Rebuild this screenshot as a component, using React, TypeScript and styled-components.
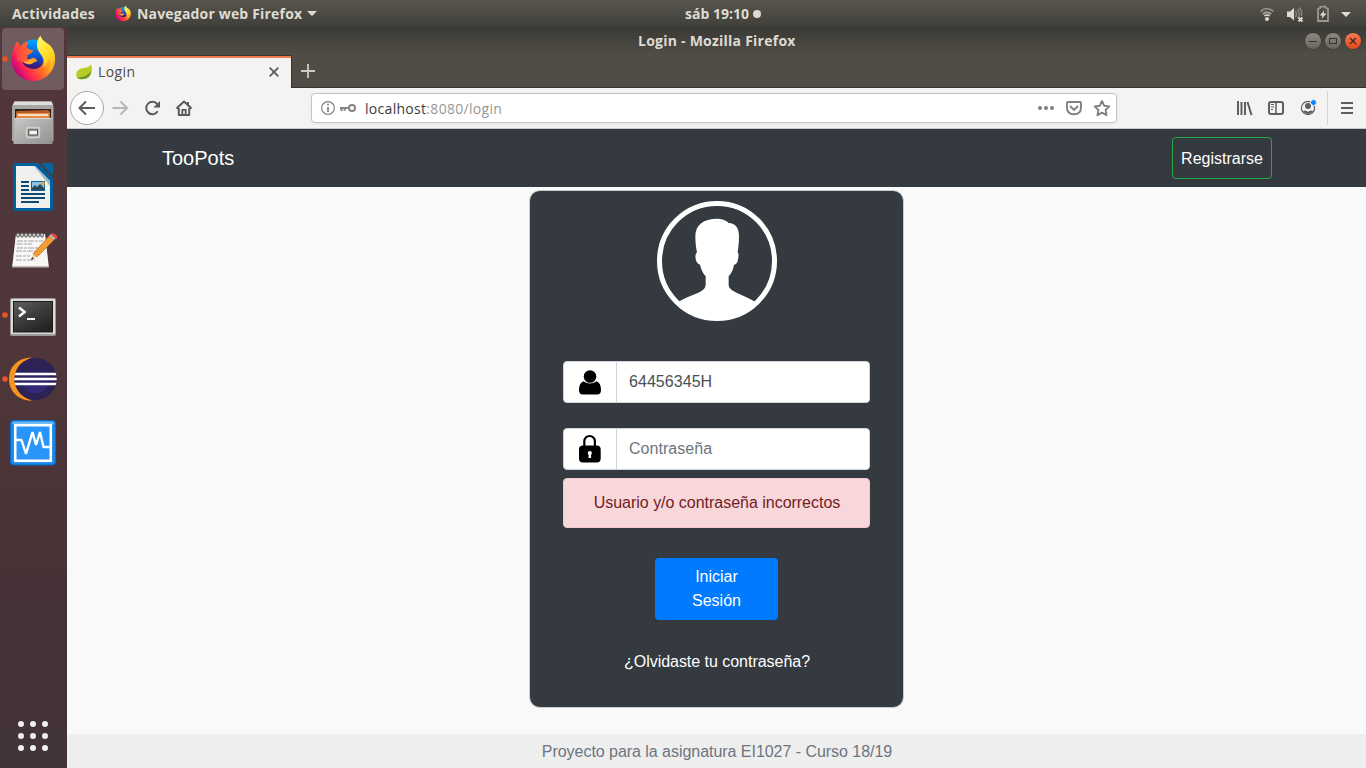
import React from "react";
import styled, { createGlobalStyle } from "styled-components";

const GlobalStyle = createGlobalStyle`
  * { box-sizing: border-box; }
  body { margin: 0; overflow: hidden; }
  svg { display: block; flex: none; }
`;

const Desktop = styled.div`
  width: 1366px;
  height: 768px;
  display: flex;
  flex-direction: column;
  overflow: hidden;
  font-family: "Open Sans", "Noto Sans", sans-serif;
`;

const TopBar = styled.header`
  height: 27px;
  flex: none;
  display: grid;
  grid-template-columns: 673px auto 1fr;
  align-items: center;
  padding: 0 14px 0 12px;
  background: linear-gradient(#58554d, #403f3a);
  color: #dfdbd2;
`;

const BarGroup = styled.div<{ $end?: boolean }>`
  display: flex;
  align-items: center;
  justify-content: ${(p) => (p.$end ? "flex-end" : "flex-start")};
`;

const Label = styled.span<{ $size?: number; $track?: number; $bold?: boolean; $color?: string }>`
  display: inline-block;
  padding-bottom: 2px;
  vertical-align: middle;
  font-size: ${(p) => p.$size ?? 14}px;
  line-height: 18px;
  letter-spacing: ${(p) => p.$track ?? 0}px;
  font-weight: ${(p) => (p.$bold ? 700 : 400)};
  color: ${(p) => p.$color ?? "inherit"};
  white-space: nowrap;
`;

const AppMenu = styled.div`
  display: flex;
  align-items: center;
  margin-left: 20px;
`;

const MenuName = styled.div`
  margin-left: 6px;
  width: 165px;
  padding-top: 2px;
  line-height: 20px;
  font-size: 14px;
`;

const ActivitiesBox = styled.div`
  width: 83px;
  padding-top: 2px;
  line-height: 20px;
  font-size: 14px;
`;

const Clock = styled.div`
  display: flex;
  align-items: center;
  gap: 4px;
  width: 76px;
`;

const ClockText = styled.div`
  width: 64px;
  padding-top: 2px;
  line-height: 20px;
  font-size: 14px;
`;

const Arrow = styled.i`
  width: 0;
  height: 0;
  margin-left: 5px;
  border: 5px solid transparent;
  border-top-color: #dfdbd2;
  border-bottom: 0;
`;

const Main = styled.div`
  flex: 1;
  min-height: 0;
  display: flex;
`;

const Dock = styled.nav`
  width: 67px;
  flex: none;
  display: flex;
  flex-direction: column;
  gap: 2px;
  padding: 1px 3px 0 2px;
  background: linear-gradient(180deg, #51373b 0%, #4f363a 45%, #453236 80%, #423438 100%);
`;

const DockItem = styled.div<{ $active?: boolean }>`
  width: 62px;
  height: 62px;
  border-radius: 4px;
  background: ${(p) => (p.$active ? "rgba(255,255,255,.18)" : "none")};
`;

const AppsButton = styled.div`
  margin: auto auto 17px 16px;
  display: grid;
  grid-template-columns: repeat(3, 6px);
  gap: 6px;
`;

const AppDot = styled.i`
  width: 6px;
  height: 6px;
  border-radius: 50%;
  background: #f1efee;
`;

const Window = styled.section`
  flex: 1;
  min-width: 0;
  display: flex;
  flex-direction: column;
`;

const TitleBar = styled.div`
  height: 28px;
  flex: none;
  display: grid;
  grid-template-columns: 1fr auto 1fr;
  align-items: center;
  padding: 0 5px 0 0;
  background: linear-gradient(#3a3935, #504d46);
  color: #dfdbd2;
`;

const TitleText = styled.div`
  width: 158px;
  grid-column: 2;
  margin-left: 6px;
  line-height: 20px;
  font-size: 14px;
`;

const WindowButtons = styled.div`
  display: flex;
  justify-content: flex-end;
  gap: 4px;
`;

const WindowButton = styled.span<{ $close?: boolean }>`
  width: 16px;
  height: 16px;
  border-radius: 50%;
  background: ${(p) => (p.$close ? "linear-gradient(#f47a55, #e0491b)" : "linear-gradient(#8b8981, #66645d)")};
  box-shadow: 0 0 0 0.5px #34322d;
`;

const TabStrip = styled.div`
  height: 33px;
  flex: none;
  display: flex;
  background: #504d46;
  border-bottom: 1px solid #34332f;
`;

const Tab = styled.div`
  width: 225px;
  height: 33px;
  display: flex;
  align-items: center;
  padding: 0 12px 0 9px;
  border-top: 1px solid #38352f;
  border-right: 1px solid #34332f;
  background: linear-gradient(#f27b50 2px, #f4f3f2 2px);
  color: #4a4a4a;
`;

const TabTitle = styled.div`
  margin-left: 6px;
  flex: 1;
  line-height: 20px;
  font-size: 14px;
`;

const NewTab = styled.div`
  padding: 9px;
`;

const Toolbar = styled.div`
  height: 41px;
  flex: none;
  display: flex;
  align-items: center;
  background: #f4f3f2;
  border-bottom: 1px solid #c9c8c6;
`;

const NavIcons = styled.div`
  width: 244px;
`;

const UrlBar = styled.div`
  width: 806px;
  height: 30px;
  display: flex;
  align-items: center;
  padding: 0 5px 0 8px;
  border: 1px solid #c7c4c0;
  border-radius: 4px;
  background: #fff;
  box-shadow: 0 1px 3px rgba(0, 0, 0, 0.06);
`;

const UrlText = styled.div`
  flex: 1;
  margin-left: 8px;
  padding-top: 3px;
  line-height: 20px;
  font-size: 14px;
`;

const ToolIcons = styled.div`
  margin-left: auto;
`;

const Page = styled.main`
  flex: 1;
  min-height: 0;
  display: flex;
  flex-direction: column;
  background: #f9f9f9;
  font-family: "Liberation Sans", Arial, sans-serif;
  font-size: 16px;
  line-height: 24px;
`;

const SiteNav = styled.nav`
  height: 58px;
  flex: none;
  display: flex;
  align-items: center;
  justify-content: space-between;
  padding: 0 94px 0 95px;
  background: #343a40;
  color: #fff;
`;

const Brand = styled.span`
  font-size: 20px;
`;

const RegisterButton = styled.button`
  width: 100px;
  height: 42px;
  padding: 2px 0 0;
  border: 1px solid #28a745;
  border-radius: 4px;
  background: transparent;
  color: #fff;
  font: inherit;
`;

const Content = styled.div`
  flex: 1;
  display: flex;
  justify-content: center;
  align-items: flex-start;
  padding-top: 3px;
`;

const Card = styled.form`
  width: 375px;
  height: 518px;
  display: flex;
  flex-direction: column;
  align-items: center;
  padding: 10px 33px 0;
  border: 1px solid #c9cbcc;
  border-radius: 11px;
  background: #343a40;
`;

const Field = styled.label`
  width: 307px;
  height: 42px;
  display: flex;
  margin-bottom: 25px;
  border: 1px solid #ced4da;
  border-radius: 4px;
  background: #fff;
  overflow: hidden;
`;

const FieldIcon = styled.span`
  width: 53px;
  border-right: 1px solid #ced4da;
`;

const FieldInput = styled.input`
  flex: 1;
  min-width: 0;
  padding: 0 12px;
  border: 0;
  outline: 0;
  background: #fff;
  color: #495057;
  font: inherit;
  letter-spacing: 0.05px;
  &::placeholder { color: #6c757d; opacity: 1; }
`;

const Alert = styled.div`
  width: 307px;
  height: 50px;
  margin: -17px 0 30px;
  padding: 12px 0 12px 1px;
  border: 1px solid #f5c6cb;
  border-radius: 4px;
  background: #f8d7da;
  color: #721c24;
  text-align: center;
  letter-spacing: -0.02px;
`;

const Submit = styled.button`
  width: 123px;
  height: 62px;
  margin: 0 0 30px;
  padding: 0 30px 1px;
  border: 0;
  border-radius: 4px;
  background: #007bff;
  color: #fff;
  font: inherit;
`;

const Forgot = styled.a`
  color: #fff;
  letter-spacing: -0.03px;
  padding-left: 1px;
`;

const AvatarWrap = styled.div`
  height: 120px;
  margin-bottom: 40px;
`;

const Footer = styled.footer`
  height: 34px;
  flex: none;
  padding: 6px 0 0 1px;
  background: #eeeeee;
  color: #6c757d;
  text-align: center;
  letter-spacing: -0.04px;
`;

const Running = ({ y }: { y: number }) => <circle cx="5" cy={y} r="2.8" fill="#e95420" />;

const FirefoxArt = ({ id }: { id: string }) => (
  <>
    <defs>
      <linearGradient id={id + "a"} x1="1" y1="0.1" x2="0.05" y2="0.7">
        <stop offset="0" stopColor="#ffe226" />
        <stop offset=".3" stopColor="#ffae1a" />
        <stop offset=".55" stopColor="#ff6a2b" />
        <stop offset=".78" stopColor="#ff2a4d" />
        <stop offset="1" stopColor="#c60084" />
      </linearGradient>
      <linearGradient id={id + "b"} x1=".6" y1="0" x2=".5" y2="1">
        <stop offset="0" stopColor="#00a8ff" />
        <stop offset=".5" stopColor="#0a55d8" />
        <stop offset=".8" stopColor="#3a1a78" />
      </linearGradient>
      <linearGradient id={id + "c"} x1=".3" y1="0" x2=".7" y2="1">
        <stop offset="0" stopColor="#fff85a" />
        <stop offset=".6" stopColor="#ffd426" />
        <stop offset="1" stopColor="#ffa414" />
      </linearGradient>
      <linearGradient id={id + "d"} x1="0" y1="0" x2="1" y2="0">
        <stop offset="0" stopColor="#ff3c45" />
        <stop offset="1" stopColor="#ff8a1f" />
      </linearGradient>
    </defs>
    <circle cx="34" cy="56.500" r="17" fill={`url(#${id}b)`} />
    <path d="M17 41C14.500 44 13.800 48 13.500 51C11 54 11 58 11.500 62C13 73 22 81 33 81C45 81 54.500 72 55 60C55.300 54 53 48 49 45L43 56C45 63 41 69 34 69C27 69 21 64 21.500 57L22 52L25 46L20 46Z" fill={`url(#${id}a)`} />
    <path d="M16 47L20.500 46Q24 41.500 28.500 42L26.500 47Q28 49.500 33 50Q33 53 27.500 55L27 58.500Q29 60 33 57.500Q37 58.500 37 61Q34 61.500 32 63.500Q28 66 23 62L17 60Z" fill={`url(#${id}d)`} />
    <path d="M22.500 61Q27 62.500 30 60Q34 57.500 37 61Q34 61.500 32 63.500Q27 65.500 22.500 61Z" fill="#ffb12a" />
    <path d="M40.500 35.500C36 41 36.500 47 38.500 51C42 56 46 61 43.500 67C48 64 49 60 49 58C52 64 50 71 44 75C57 68 58 52 49 44.500C45 42 41 39 40.500 35.500Z" fill={`url(#${id}c)`} />
  </>
);

const FirefoxIcon = () => (
  <svg width="62" height="62" viewBox="2 28 62 62">
    <FirefoxArt id="fxl" />
    <Running y={59} />
  </svg>
);

const FilesIcon = () => (
  <svg width="62" height="62" viewBox="2 92 62 62">
    <defs>
      <linearGradient id="fg" x2="1" y2="1">
        <stop stopColor="#c8c8c6" />
        <stop offset="1" stopColor="#92918f" />
      </linearGradient>
    </defs>
    <path d="M14.500 101.500H51.500L53.500 106V141H12V106Z" fill="#a7a6a4" />
    <path d="M14.500 101.500H51.500L53 105H13Z" fill="#dededc" />
    <path d="M15 109H51V118H15Z" fill="#2e211a" />
    <path d="M17 111L48 110L50 112V119H16V112Z" fill="#b55a26" />
    <path d="M16.500 113H49.500V118H16.500Z" fill="#e58a48" />
    <path d="M18 114.200H48V115.800H18Z" fill="#fff0df" />
    <path d="M14.500 118H51.500L52.500 144H13.500Z" fill="url(#fg)" />
    <path d="M14.500 118.500H51.500" stroke="#d7d6d4" />
    <rect x="26.700" y="127.700" width="12.600" height="9.600" rx="1" fill="#9d9c9a" stroke="#d3d2d0" strokeWidth="1.700" />
    <rect x="28.800" y="130" width="8.700" height="5" fill="#f2f2f0" stroke="#4c4b49" />
  </svg>
);

const WriterIcon = () => (
  <svg width="62" height="62" viewBox="2 156 62 62">
    <path d="M15 163H38L53 178.500V209Q53 211 51 211H15Q13 211 13 209V165Q13 163 15 163Z" fill="#00609c" />
    <path d="M16 166H35L50 181V208H16Z" fill="#f1f0ef" />
    <path d="M35 166L50 181V186L34 166Z" fill="#9fb8c8" />
    <path d="M41 163H51Q53 163 53 165V175Q49 173 46 169Z" fill="#05669f" />
    <path d="M21 182H29M21 186H29M21 190H29M21 194H45M21 198H45M21 202H39" stroke="#0d4973" strokeWidth="1.800" />
    <rect x="31" y="181" width="14" height="10" fill="#0c659a" />
    <rect x="32" y="182" width="12" height="8" fill="#8ec2df" />
    <path d="M32 190V188L35 185L37 187L40 184L44 188V190Z" fill="#294956" />
    <circle cx="43" cy="183.500" r="2" fill="#dba936" />
  </svg>
);

const EditorIcon = () => (
  <svg width="62" height="62" viewBox="2 220 62 62">
    <path d="M16 235H45L49 267.500H12Z" fill="#bbb9b5" />
    <path d="M16 234H45L48.500 266H12.500Z" fill="#f8f7f5" />
    {[18, 22, 26, 30, 34, 38, 42].map((x) => (
      <ellipse key={x} cx={x} cy="235" rx="1.400" ry="2.200" fill="#ddd" stroke="#454442" strokeWidth=".9" />
    ))}
    <path d="M17 241H43M16.500 244H32M17 248H39M16 251H36M16 256H30M16 260H35" stroke="#a5a4a2" strokeDasharray="6 1 3 1" />
    <path d="M33 254L49 236L54 240L37 257Z" fill="#f39b35" stroke="#b66518" strokeWidth=".7" />
    <path d="M33 254L37 257L31 260Z" fill="#f2d6a4" />
    <path d="M31 260L32 257.200L34 258.500Z" fill="#262321" />
    <path d="M49 236L51 234L56 238L54 240Z" fill="#babab8" />
    <path d="M51 234Q55 233 57 237L56 239Z" fill="#ee4a4a" stroke="#ee4a4a" />
  </svg>
);

const TerminalIcon = () => (
  <svg width="62" height="62" viewBox="2 284 62 62">
    <defs>
      <linearGradient id="tm" x2=".7" y2="1">
        <stop stopColor="#606060" />
        <stop offset=".55" stopColor="#3a3a3a" />
        <stop offset="1" stopColor="#242424" />
      </linearGradient>
    </defs>
    <rect x="10" y="298" width="46" height="38" rx="2" fill="#9b9a98" />
    <rect x="11" y="299" width="44" height="35" rx="1" fill="#dbdad8" />
    <rect x="13.500" y="301.500" width="39" height="30.500" fill="url(#tm)" stroke="#1c1c1c" />
    <path d="M19 307.500L24.500 312L19 316.500" fill="none" stroke="#f3f3f3" strokeWidth="2.600" />
    <path d="M27 319H35" stroke="#f3f3f3" strokeWidth="2" />
    <Running y={315} />
  </svg>
);

const EclipseIcon = () => (
  <svg width="62" height="62" viewBox="2 348 62 62">
    <defs>
      <linearGradient id="ec" x2="0" y2="1">
        <stop stopColor="#2c2255" />
        <stop offset="1" stopColor="#36297a" />
      </linearGradient>
      <clipPath id="ecc"><circle cx="35.500" cy="379" r="21.200" /></clipPath>
    </defs>
    <path d="M32 357.200C17 358 9 367 9 379C9 391 18 400.500 32 400.800C10 391 10 367 32 357.200Z" fill="#f7941e" />
    <circle cx="35.500" cy="379" r="21.200" fill="#2c2255" />
    <circle cx="35.500" cy="379" r="14" fill="url(#ec)" />
    <path clipPath="url(#ecc)" d="M14 374H58M14 379H58M14 384H58" stroke="#fff" strokeWidth="2.400" />
    <Running y={379} />
  </svg>
);

const MonitorIcon = () => (
  <svg width="62" height="62" viewBox="2 412 62 62">
    <rect x="10.500" y="420.500" width="45" height="44.500" rx="3" fill="#1688ea" stroke="#0d66c4" />
    <rect x="12" y="421.500" width="42" height="3" rx="1.500" fill="#61b8fb" />
    <rect x="15.200" y="425.200" width="35.600" height="35.600" fill="#2995f8" stroke="#fff" strokeWidth="2.600" />
    <path d="M16 440H21.500L26 454L32.500 432L36 445L40 432L43.500 447H50" fill="none" stroke="#fff" strokeWidth="2.400" strokeLinejoin="bevel" />
  </svg>
);

const SmallFirefox = () => (
  <svg width="16" height="17" viewBox="10 34 46 49"><FirefoxArt id="fxs" /></svg>
);

const StatusIcons = () => (
  <svg width="92" height="24" viewBox="1260 1 92 24" fill="none">
    <path d="M1260.500 10.500Q1267 4.800 1273.500 10.500" stroke="#918f88" strokeWidth="1.800" />
    <path d="M1262.700 13.200Q1267 9.300 1271.300 13.200" stroke="#a3a19a" strokeWidth="1.700" />
    <path d="M1264.300 15Q1267 12.800 1269.700 15" stroke="#dfdbd2" strokeWidth="1.500" />
    <circle cx="1267" cy="18" r="2" fill="#dfdbd2" />
    <path d="M1287 10.500H1290L1294 7V19.500L1290 16H1287Z" fill="#dfdbd2" />
    <path d="M1295.500 10Q1297.300 13 1295.500 16.500M1297.500 8Q1301 13 1297.800 17M1299.300 6.500Q1303 10.500 1301.300 15" stroke="#8a8881" strokeWidth="1.400" />
    <path d="M1298.500 16.500L1302.500 20.500M1302.500 16.500L1298.500 20.500" stroke="#dfdbd2" strokeWidth="1.800" />
    <path d="M1320.500 6.500V5.700H1325.500V6.500L1328 8V20H1318V8Z" stroke="#99978f" strokeWidth="1.800" />
    <path d="M1324.500 9L1319.700 14.500H1322.500L1321.500 18L1326.500 12.500H1323.600Z" fill="#dfdbd2" />
    <path d="M1341 11H1351L1346 16Z" fill="#dfdbd2" />
  </svg>
);

const BrowserNav = () => (
  <svg width="140" height="38" viewBox="67 89 140 38" fill="none">
    <circle cx="87" cy="108" r="16.500" fill="#fdfdfd" stroke="#aaa8a5" />
    <path d="M95 108H80M86 101.500L79.500 108L86 114.500" stroke="#5c5b5a" strokeWidth="2" />
    <path d="M112.500 108H127M120.500 101.500L127 108L120.500 114.500" stroke="#b8b7b5" strokeWidth="2" />
    <path d="M157.300 104.200A6.200 6.200 0 1 0 157.700 111.300" stroke="#5c5b5a" strokeWidth="2" />
    <path d="M160 101V107.500H153.300Z" fill="#5c5b5a" />
    <path d="M176.500 108.500L184 101.500L191.500 108.500M178.800 108V115H189.200V108M188 105V102" stroke="#5c5b5a" strokeWidth="2" strokeLinejoin="round" />
    <path d="M182.300 115V109.800H185.700V115" stroke="#5c5b5a" strokeWidth="1.800" />
  </svg>
);

const UrlIcons = () => (
  <svg width="37" height="20" viewBox="320 98 37 20" fill="none">
    <circle cx="328" cy="108" r="6.400" stroke="#858483" strokeWidth="1.200" />
    <path d="M328 107V112M328 103.800V105.500" stroke="#858483" strokeWidth="1.800" />
    <circle cx="352" cy="108" r="3" stroke="#858483" strokeWidth="2" />
    <path d="M340 108H349M341.500 108V111M344.700 108V110.700" stroke="#858483" strokeWidth="2" />
  </svg>
);

const UrlActions = () => (
  <svg width="76" height="20" viewBox="1035 98 76 20" fill="none" stroke="#81807f" strokeWidth="1.900">
    <g fill="#81807f" stroke="none"><circle cx="1040" cy="108" r="2" /><circle cx="1046" cy="108" r="2" /><circle cx="1052" cy="108" r="2" /></g>
    <path d="M1068 102H1080Q1081 102 1081 103V107.500Q1081 114.200 1074 114.200Q1067 114.200 1067 107.500V103Q1067 102 1068 102Z" />
    <path d="M1070 106L1074 110L1078 106" />
    <path d="M1102 101L1104.200 105.700L1109.300 106.400L1105.600 110L1106.500 115.200L1102 112.700L1097.500 115.200L1098.400 110L1094.700 106.400L1099.800 105.700Z" strokeLinejoin="round" />
  </svg>
);

const BrowserTools = () => (
  <svg width="132" height="38" viewBox="1234 89 132 38" fill="none" stroke="#5f5e5d" strokeWidth="2">
    <path d="M1238 101V115M1241.500 102V115M1245 102V115M1247.500 102L1251.500 115" />
    <rect x="1269" y="102" width="14" height="12" rx="2" />
    <path d="M1276 102V114" strokeWidth="1.500" />
    <path d="M1271 104.500H1274M1271 107H1274M1271 109.500H1273" strokeWidth="1" />
    <circle cx="1308" cy="108" r="6.600" strokeWidth="1.200" />
    <circle cx="1308" cy="106" r="3" fill="#5f5e5d" stroke="none" />
    <path d="M1302.800 111.300Q1305 110 1306.500 111Q1308 112 1309.500 111Q1311 110 1313.200 111.300Q1308 117 1302.800 111.300Z" fill="#5f5e5d" stroke="none" />
    <circle cx="1313.500" cy="102.500" r="3" fill="#0a84ff" stroke="#f4f3f2" strokeWidth="1" />
    <path d="M1327.500 91V125" stroke="#d5d4d2" strokeWidth="1" />
    <path d="M1341 103H1353M1341 108H1353M1341 113H1353" />
  </svg>
);

const Leaf = () => (
  <svg width="16" height="16" viewBox="76 64 16 16">
    <path d="M91 64.500Q88 68 83 68Q76.500 69 76.200 74.500Q76 77.500 78 79Q92 81 92 69Q92 67 91 64.500Z" fill="#b8cc27" />
    <path d="M77.500 77.500Q87 77 91 71Q90.500 79 82 79.200Q79 79.200 77.500 77.500Z" fill="#6b982c" />
  </svg>
);

const Avatar = () => (
  <svg width="120" height="120" viewBox="51 48 360 360">
    <defs><clipPath id="av"><circle cx="231" cy="228" r="178" /></clipPath></defs>
    <circle cx="231" cy="228" r="172.500" fill="none" stroke="#fff" strokeWidth="15" />
    <path clipPath="url(#av)" fill="#fff" d="M231 101C247 101 259 106 266 114C286 114 297 129 297 153C297 173 295 188 293 202C297 206 296 216 293 227C291 235 287 239 282 239C280 254 274 265 266 274V300C267 312 279 318 293 325L324 339Q338 346 348 352V420H114V352Q124 345 142 337L173 324C188 317 196 311 197 300V274C189 265 183 253 180 239C174 237 171 235 168 226C165 216 166 206 171 202C168 187 166 172 166 153C166 120 191 101 231 101Z" />
  </svg>
);

const UserIcon = () => (
  <svg width="52" height="40" viewBox="564 362 52 40">
    <circle cx="590" cy="376.500" r="6.300" />
    <path d="M583.500 381.200Q590 385.600 596.500 381.200Q601 383 601 390Q601 394.500 597 394.500H583Q579 394.500 579 390Q579 383 583.500 381.200Z" />
  </svg>
);

const LockIcon = () => (
  <svg width="52" height="40" viewBox="564 429 52 40">
    <path d="M584.300 447V441.300A5.300 5.300 0 0 1 594.900 441.300V447" fill="none" stroke="#000" strokeWidth="2.200" />
    <rect x="579" y="445.500" width="21.700" height="17" rx="4" />
    <circle cx="589.800" cy="453" r="2.100" fill="#fff" />
    <path d="M588.800 453H590.800L591.200 458H588.400Z" fill="#fff" />
  </svg>
);

export default function App() {
  return (
    <Desktop>
      <GlobalStyle />
      <TopBar>
        <BarGroup>
          <ActivitiesBox><Label $bold $track={0.18}>Actividades</Label></ActivitiesBox>
          <AppMenu>
            <SmallFirefox />
            <MenuName><Label $bold $track={0.18}>Navegador web Firefox</Label></MenuName>
            <Arrow />
          </AppMenu>
        </BarGroup>
        <Clock>
          <ClockText><Label $bold>sáb 19:10</Label></ClockText>
          <svg width="8" height="8" viewBox="0 0 8 8"><circle cx="4" cy="4" r="4" fill="#dfdbd2" /></svg>
        </Clock>
        <BarGroup $end><StatusIcons /></BarGroup>
      </TopBar>
      <Main>
        <Dock>
          <DockItem $active><FirefoxIcon /></DockItem>
          <DockItem><FilesIcon /></DockItem>
          <DockItem><WriterIcon /></DockItem>
          <DockItem><EditorIcon /></DockItem>
          <DockItem><TerminalIcon /></DockItem>
          <DockItem><EclipseIcon /></DockItem>
          <DockItem><MonitorIcon /></DockItem>
          <AppsButton>
            {Array.from({ length: 9 }, (_, i) => <AppDot key={i} />)}
          </AppsButton>
        </Dock>
        <Window>
          <TitleBar>
            <TitleText><Label $bold $track={0.24}>Login - Mozilla Firefox</Label></TitleText>
            <WindowButtons>
              <WindowButton>
                <svg width="16" height="16" viewBox="0 0 16 16"><path d="M4 8.500H12" stroke="#34332e" /></svg>
              </WindowButton>
              <WindowButton>
                <svg width="16" height="16" viewBox="0 0 16 16"><rect x="4.500" y="5.500" width="7" height="5" fill="none" stroke="#34332e" /></svg>
              </WindowButton>
              <WindowButton $close>
                <svg width="16" height="16" viewBox="0 0 16 16"><path d="M5 5L11 11M11 5L5 11" stroke="#49251a" strokeWidth="1.300" /></svg>
              </WindowButton>
            </WindowButtons>
          </TitleBar>
          <TabStrip>
            <Tab>
              <Leaf />
              <TabTitle><Label $track={0.4}>Login</Label></TabTitle>
              <svg width="10" height="10" viewBox="0 0 10 10"><path d="M.7.7L9.300 9.300M9.300.7L.7 9.300" stroke="#5a5958" strokeWidth="1.700" /></svg>
            </Tab>
            <NewTab>
              <svg width="14" height="14" viewBox="0 0 14 14"><path d="M7 0V14M0 7H14" stroke="#cfccc5" strokeWidth="1.800" /></svg>
            </NewTab>
          </TabStrip>
          <Toolbar>
            <NavIcons><BrowserNav /></NavIcons>
            <UrlBar>
              <UrlIcons />
              <UrlText>
                <Label $track={0.3} $color="#3b3b3b">localhost</Label>
                <Label $track={0.3} $color="#999794">:8080/login</Label>
              </UrlText>
              <UrlActions />
            </UrlBar>
            <ToolIcons><BrowserTools /></ToolIcons>
          </Toolbar>
          <Page>
            <SiteNav>
              <Brand>TooPots</Brand>
              <RegisterButton>Registrarse</RegisterButton>
            </SiteNav>
            <Content>
              <Card>
                <AvatarWrap><Avatar /></AvatarWrap>
                <Field>
                  <FieldIcon><UserIcon /></FieldIcon>
                  <FieldInput defaultValue="64456345H" />
                </Field>
                <Field>
                  <FieldIcon><LockIcon /></FieldIcon>
                  <FieldInput type="password" placeholder="Contraseña" />
                </Field>
                <Alert>Usuario y/o contraseña incorrectos</Alert>
                <Submit type="button">Iniciar Sesión</Submit>
                <Forgot>¿Olvidaste tu contraseña?</Forgot>
              </Card>
            </Content>
            <Footer>Proyecto para la asignatura EI1027 - Curso 18/19</Footer>
          </Page>
        </Window>
      </Main>
    </Desktop>
  );
}
